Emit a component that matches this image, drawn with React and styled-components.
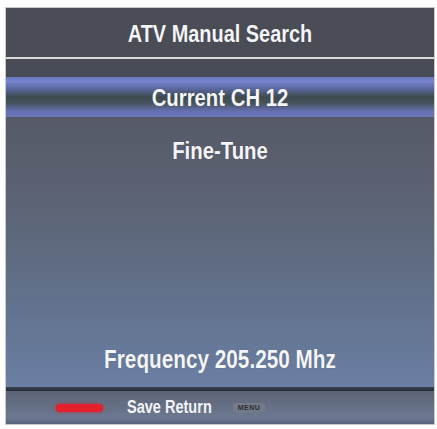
import React from 'react';
import styled, { createGlobalStyle } from 'styled-components';

const GlobalStyle = createGlobalStyle`
	html, body {
		margin: 0;
		padding: 0;
		background: #ffffff;
	}
	body {
		font-family: 'Liberation Sans', Arial, sans-serif;
	}
`;

const Page = styled.div`
	width: 437px;
	height: 429px;
	padding: 7px 2px 0 5px;
	box-sizing: border-box;
`;

const Panel = styled.div`
	width: 430px;
	height: 418px;
	box-sizing: border-box;
	border: 1px solid #c9c9cc;
	display: flex;
	flex-direction: column;
	background: #4a4c56;
`;

// condensed OSD lettering: Arial squeezed horizontally around the centre
const Label = styled.div`
	color: #f4f5f8;
	font-weight: bold;
	font-size: ${(p) => p.$size || 24}px;
	line-height: ${(p) => p.$size || 24}px;
	text-align: center;
	transform: scaleX(0.83);
	text-shadow: 0 0 1px rgba(0, 0, 0, 0.35);
`;

const Header = styled.div`
	height: 49px;
	padding-top: 14px;
	box-sizing: border-box;
	background: #4b4d56;
`;

const Divider = styled.div`
	height: 2px;
	background: #d9dadc;
`;

const Spacer = styled.div`
	height: 18px;
	background: linear-gradient(#494b55, #474b56);
`;

const SelectedRow = styled.div`
	height: 40px;
	padding-top: 9px;
	box-sizing: border-box;
	background: linear-gradient(
		#6a78c0 0%,
		#7785cc 12%,
		#5a679e 30%,
		#3e4a4e 50%,
		#47525c 65%,
		#6470b0 85%,
		#6c77bc 100%
	);
`;

const Body = styled.div`
	flex: 1;
	display: flex;
	flex-direction: column;
	justify-content: space-between;
	padding: 22px 0 15px;
	background: linear-gradient(#565a68 0%, #5c6373 30%, #62708a 65%, #6a7fa3 100%);
`;

const BodyRule = styled.div`
	height: 4px;
	background: linear-gradient(#3a4250, #262c36);
`;

const Footer = styled.div`
	height: 33px;
	display: flex;
	align-items: center;
	padding-left: 50px;
	background: linear-gradient(#5c6476 0%, #646d82 40%, #6c7892 80%, #5a627c 100%);
`;

const ColorKey = styled.div`
	width: 47px;
	height: 8px;
	border-radius: 4px;
	background: ${(p) => p.$color};
	box-shadow: 0 0 3px ${(p) => p.$color};
	margin-right: 24px;
`;

const FooterText = styled.span`
	display: inline-block;
	color: #f2f3f6;
	font-weight: bold;
	font-size: 17.5px;
	transform: scaleX(0.83);
	transform-origin: left center;
	width: 86px;
	margin-right: 20px;
	white-space: nowrap;
`;

const KeyCap = styled.span`
	display: inline-flex;
	align-items: center;
	justify-content: center;
	width: 32px;
	height: 10px;
	border-radius: 3px;
	background: #757a88;
	color: #2a2c33;
	font-size: 7px;
	font-weight: bold;
	letter-spacing: 0.5px;
`;

export default function App() {
	return (
		<>
			<GlobalStyle />
			<Page>
				<Panel>
					<Header>
						<Label>ATV Manual Search</Label>
					</Header>
					<Divider />
					<Spacer />
					<SelectedRow>
						<Label $size={24.5}>Current CH 12</Label>
					</SelectedRow>
					<Body>
						<Label $size={24.5}>Fine-Tune</Label>
						<Label $size={25}>Frequency 205.250 Mhz</Label>
					</Body>
					<BodyRule />
					<Footer>
						<ColorKey $color="#e3202c" />
						<FooterText>Save Return</FooterText>
						<KeyCap>MENU</KeyCap>
					</Footer>
				</Panel>
			</Page>
		</>
	);
}
